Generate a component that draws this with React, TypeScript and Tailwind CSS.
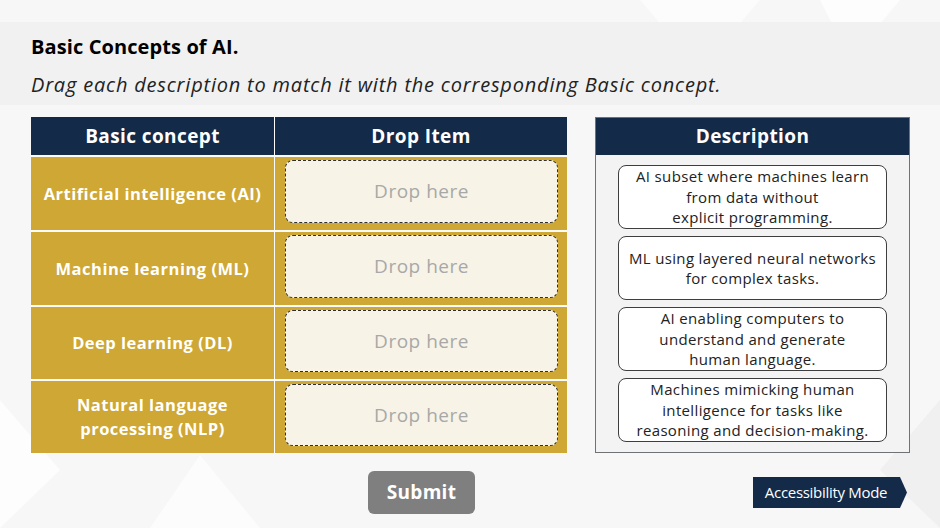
import React from "react";

const CONCEPTS = [
  "Artificial intelligence (AI)",
  "Machine learning (ML)",
  "Deep learning (DL)",
  "Natural language processing (NLP)",
];

const DESCRIPTIONS = [
  ["AI subset where machines learn", "from data without", "explicit programming."],
  ["ML using layered neural networks", "for complex tasks."],
  ["AI enabling computers to", "understand and generate", "human language."],
  ["Machines mimicking human", "intelligence for tasks like", "reasoning and decision-making."],
];

const font = "font-['Open_Sans','Noto_Sans',sans-serif]";

export default function App() {
  return (
    <div
      className={`relative h-[528px] w-[940px] overflow-hidden bg-[#f7f7f7] text-black ${font}`}
    >
      {/* faint backdrop shapes */}
      <svg
        className="pointer-events-none absolute inset-0"
        width="940"
        height="528"
        viewBox="0 0 940 528"
      >
        <polygon points="0,400 60,470 0,528" fill="#ffffff" opacity="0.7" />
        <polygon points="150,528 200,455 260,528" fill="#ffffff" opacity="0.6" />
        <polygon points="640,0 700,70 760,0" fill="#ffffff" opacity="0.6" />
        <polygon points="820,0 850,60 900,0" fill="#ffffff" opacity="0.7" />
        <polygon points="880,470 940,400 940,528" fill="#eeeeee" opacity="0.8" />
      </svg>

      <div className="relative flex flex-col">
        <div className="h-[22px]" />
        <div className="flex h-[83px] flex-col bg-[#f1f1f1] pl-[31px] pt-[12px]">
          <h1 className="text-[20px] font-bold leading-[26px] tracking-[0.1px]">
            Basic Concepts of AI.
          </h1>
          <p className="mt-[12px] text-[20px] italic leading-[26px] tracking-[0.8px] text-[#222]">
            Drag each description to match it with the corresponding Basic concept.
          </p>
        </div>

        <div className="mt-[12px] flex items-start pl-[31px]">
          <div className="grid w-[536px] grid-cols-[243px_292px] gap-x-[1px] gap-y-[2px] bg-[#fbfbfb]">
            <div className="flex h-[38px] items-center justify-center bg-[#132a48] text-[19px] font-bold tracking-[0.4px] text-white">
              Basic concept
            </div>
            <div className="flex h-[38px] items-center justify-center bg-[#132a48] text-[19px] font-bold tracking-[0.4px] text-white">
              Drop Item
            </div>
            {CONCEPTS.map((c, i) => (
              <React.Fragment key={c}>
                <div
                  className={`flex ${i < 2 ? "h-[73px]" : "h-[72px]"} items-center justify-center bg-[#cea734] px-[10px] text-center text-[16.5px] font-bold leading-[24px] tracking-[0.5px] text-white`}
                >
                  {i === 3 ? (
                    <span>
                      Natural language
                      <br />
                      processing (NLP)
                    </span>
                  ) : (
                    c
                  )}
                </div>
                <div className="flex bg-[#cea734] pb-[7px] pl-[10px] pr-[9px] pt-[3px]">
                  <div className="flex flex-1 items-center justify-center rounded-[8px] border border-dashed border-[#2e2e2e] bg-[#f7f3e7] text-[19px] tracking-[0.5px] text-[#a8a8a8]">
                    Drop here
                  </div>
                </div>
              </React.Fragment>
            ))}
          </div>

          <div className="ml-[28px] flex w-[315px] flex-col border border-[#6f7376] bg-[#f3f3f4]">
            <div className="flex h-[37px] items-center justify-center bg-[#132a48] text-[19px] font-bold tracking-[0.4px] text-white">
              Description
            </div>
            <div className="flex flex-col gap-[7px] px-[22px] pb-[10px] pt-[10px]">
              {DESCRIPTIONS.map((lines, i) => (
                <div
                  key={i}
                  className="flex h-[64px] flex-col items-center justify-center rounded-[8px] border border-[#3e3e3e] bg-white text-center text-[15px] leading-[20.5px] tracking-[0.35px] text-[#222]"
                >
                  {lines.map((l) => (
                    <span key={l}>{l}</span>
                  ))}
                </div>
              ))}
            </div>
          </div>
        </div>

        <div className="mt-[18px] flex items-start">
          <div className="ml-[368px] flex h-[43px] w-[107px] items-center justify-center rounded-[6px] bg-[#7f7f7f] text-[19px] font-bold tracking-[0.3px] text-white">
            Submit
          </div>
          <div className="ml-[278px] mt-[6px] flex items-center">
            <div className="flex h-[31px] w-[146px] items-center justify-center bg-[#132a48] text-[15px] tracking-[-0.3px] text-white">
              Accessibility Mode
            </div>
            <svg width="8" height="31" viewBox="0 0 8 31">
              <polygon points="0,0 1,0 8,15.5 1,31 0,31" fill="#132a48" />
            </svg>
          </div>
        </div>
      </div>
    </div>
  );
}
